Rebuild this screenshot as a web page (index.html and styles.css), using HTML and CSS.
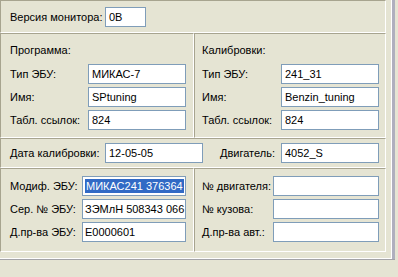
FILE: index.html
```
<!DOCTYPE html>
<html lang="ru">
<head>
  <meta charset="UTF-8">
  <title>Информация об ЭБУ</title>
  <link rel="stylesheet" href="styles.css">
</head>
<body>
  <div class="window">
    <div class="frame">
      <div class="panel panel--top">
        <span class="label label--wide">Версия монитора:</span>
        <div class="field field--short">0B</div>
      </div>

      <div class="pair">
        <div class="panel panel--left panel--mid">
          <div class="heading">Программа:</div>
          <div class="line"><span class="label">Тип ЭБУ:</span><div class="field">МИКАС-7</div></div>
          <div class="line"><span class="label">Имя:</span><div class="field">SPtuning</div></div>
          <div class="line"><span class="label">Табл. ссылок:</span><div class="field">824</div></div>
        </div>
        <div class="panel panel--right panel--mid">
          <div class="heading">Калибровки:</div>
          <div class="line"><span class="label">Тип ЭБУ:</span><div class="field">241_31</div></div>
          <div class="line"><span class="label">Имя:</span><div class="field">Benzin_tuning</div></div>
          <div class="line"><span class="label">Табл. ссылок:</span><div class="field">824</div></div>
        </div>
      </div>

      <div class="panel panel--date">
        <span class="label label--wide">Дата калибровки:</span>
        <div class="field">12-05-05</div>
        <span class="label label--end">Двигатель:</span>
        <div class="field">4052_S</div>
      </div>

      <div class="pair">
        <div class="panel panel--left panel--low">
          <div class="line"><span class="label">Модиф. ЭБУ:</span><div class="field field--ecu"><span class="selected">МИКАС241 376364</span></div></div>
          <div class="line"><span class="label">Сер. № ЭБУ:</span><div class="field field--ecu">ЗЭМлН 508343 066</div></div>
          <div class="line"><span class="label">Д.пр-ва ЭБУ:</span><div class="field field--ecu">E0000601</div></div>
        </div>
        <div class="panel panel--right panel--low">
          <div class="line"><span class="label">№ двигателя:</span><div class="field field--car"></div></div>
          <div class="line"><span class="label">№ кузова:</span><div class="field field--car"></div></div>
          <div class="line"><span class="label">Д.пр-ва авт.:</span><div class="field field--car"></div></div>
        </div>
      </div>
    </div>
    <div class="edge"></div>
  </div>
</body>
</html>
```

FILE: styles.css
```
* { box-sizing: border-box; }
body {
  margin: 0;
  width: 398px;
  height: 277px;
  overflow: hidden;
  background: #e5e4d3;
  font-family: "Liberation Sans", Arial, sans-serif;
  font-size: 11px;
  color: #000;
}
.window {
  display: flex;
  width: 395px;
  height: 260px;
  border-bottom: 1px solid #a3a3a8;
}
.frame {
  width: 392px;
  padding-right: 5px;
  padding-bottom: 6px;
  border-right: 1px solid #fff;
  border-bottom: 1px solid #fff;
}
.edge {
  width: 3px;
  background: #afafbe;
}
.panel {
  border: 1px solid;
  border-color: #a7a48f #fff #fff #a7a48f;
}
.panel--top {
  height: 33px;
  display: flex;
  padding: 6px 0 0 9px;
}
.pair {
  display: flex;
}
.panel--left {
  width: 194px;
  padding: 0 7px 0 9px;
}
.panel--right {
  width: 192px;
  padding: 0 6px 0 7px;
}
.panel--mid {
  height: 105px;
  padding-top: 9px;
}
.panel--low {
  height: 84px;
  padding-top: 7px;
}
.heading {
  height: 14px;
  line-height: 14px;
  margin-bottom: 7px;
}
.line {
  display: flex;
  align-items: center;
  height: 20px;
  margin-bottom: 3px;
}
.label {
  flex: 1;
  white-space: nowrap;
}
.label--wide {
  flex: none;
  width: 95px;
  line-height: 20px;
}
.label--end {
  flex: 1;
  text-align: right;
  margin-right: 6px;
  line-height: 20px;
}
.field {
  flex: none;
  width: 98px;
  height: 20px;
  border: 1px solid #7f9db9;
  background: #fff;
  padding: 0 3px;
  line-height: 18px;
  white-space: nowrap;
  overflow: hidden;
}
.field--short {
  width: 41px;
}
.field--ecu {
  width: 104px;
  padding-left: 2px;
}
.field--car {
  width: 106px;
}
.selected {
  background: #316ac5;
  color: #fff;
  padding: 1px 1px;
}
.panel--date {
  height: 30px;
  display: flex;
  padding: 4px 6px 0 9px;
}
```
